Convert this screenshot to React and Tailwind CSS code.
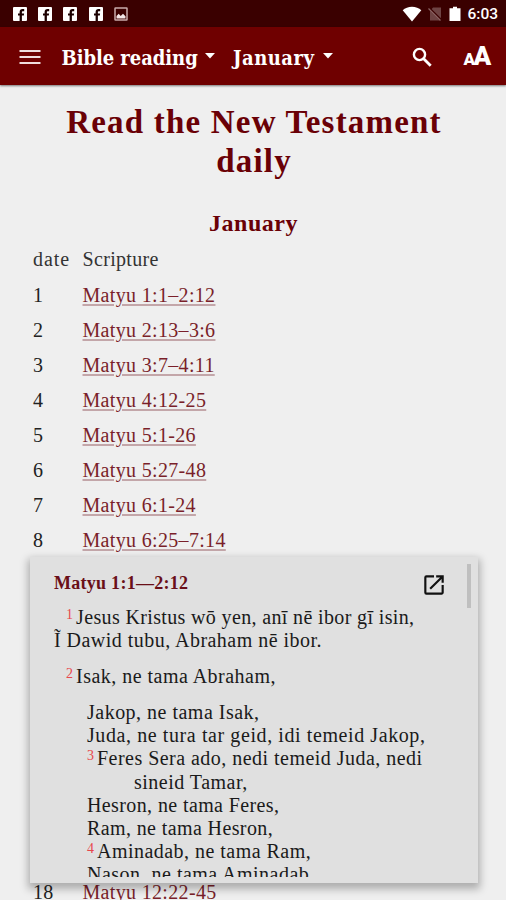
import clsx from "clsx";

const readings = [
  { date: "1", text: "Matyu 1:1–2:12" },
  { date: "2", text: "Matyu 2:13–3:6" },
  { date: "3", text: "Matyu 3:7–4:11" },
  { date: "4", text: "Matyu 4:12-25" },
  { date: "5", text: "Matyu 5:1-26" },
  { date: "6", text: "Matyu 5:27-48" },
  { date: "7", text: "Matyu 6:1-24" },
  { date: "8", text: "Matyu 6:25–7:14" },
  { date: "18", text: "Matyu 12:22-45", className: "mt-[317px]" },
];

const verses = [
  { verse: "1", text: "Jesus Kristus wō yen, anī nē ibor gī isin,", className: "ml-3 tracking-[0.36px]" },
  { text: "Ĩ Dawid tubu, Abraham nē ibor.", className: "tracking-[0.47px]" },
  { verse: "2", text: "Isak, ne tama Abraham,", className: "mt-[13px] ml-3 tracking-[0.48px]" },
  { text: "Jakop, ne tama Isak,", className: "mt-[12.500px] ml-[33px] tracking-[0.49px]" },
  { text: "Juda, ne tura tar geid, idi temeid Jakop,", className: "ml-[33px] tracking-[0.59px]" },
  { verse: "3", text: "Feres Sera ado, nedi temeid Juda, nedi", className: "ml-[33px] tracking-[0.47px]" },
  { text: "sineid Tamar,", className: "ml-20 tracking-[0.49px]" },
  { text: "Hesron, ne tama Feres,", className: "ml-[33px] tracking-[0.39px]" },
  { text: "Ram, ne tama Hesron,", className: "ml-[33px] tracking-[0.39px]" },
  { verse: "4", text: "Aminadab, ne tama Ram,", className: "ml-[33px] tracking-[0.47px]" },
  { text: "Nason, ne tama Aminadab,", className: "ml-[33px] tracking-[0.49px]" },
];

const FacebookIcon = () => (
  <svg viewBox="0 0 14 14" className="h-3.5 w-3.5">
    <rect width="14" height="14" rx="1" fill="#fff" />
    <path
      fill="#1c0000"
      d="M6.600 14V8.600H5V6.400h1.600V5c0-1.900 1.100-3 2.900-3h1.700v2.200H9.900c-.7 0-1 .3-1 1v1.200h2.200l-.3 2.200H8.900V14z"
    />
  </svg>
);

const StatusBar = () => (
  <div className="flex h-[27px] shrink-0 items-center bg-[#3a0000] pt-px pr-[8px] pl-[13px]">
    <div className="flex items-center gap-[11.200px]">
      <FacebookIcon />
      <FacebookIcon />
      <FacebookIcon />
      <FacebookIcon />
      <svg viewBox="0 0 14 14" className="h-3.5 w-3.5" fill="none">
        <rect x="1" y="1" width="12" height="12" rx="0.5" stroke="#c9aaaa" strokeWidth="1.500" />
        <path d="M2.500 11.500V9l2.200-2.200 2 2.200L9 6.800l2.500 2.400v2.300z" fill="#f3e6e6" />
      </svg>
    </div>
    <div className="ml-auto flex items-center">
      <svg viewBox="0 0 20 16" className="h-4 w-5">
        <path d="M10 15.500.7 4.200C3 2 6.500.8 10 .8s7 1.200 9.300 3.400z" fill="#fff" />
      </svg>
      <svg viewBox="0 0 14 16" className="ml-[6px] h-4 w-3.5">
        <path d="M5 1.500h8v13H2V5z" fill="#6e4343" />
        <path d="M1 2l12.500 12.500" stroke="#3a0000" strokeWidth="2.400" />
        <path d="M.5 2.500 12.500 14.500" stroke="#8a6161" strokeWidth="1.200" />
      </svg>
      <svg viewBox="0 0 12 16" className="ml-[7px] h-4 w-3">
        <path d="M4 .8h4v1.500h3.500V15H.5V2.300H4z" fill="#fff" />
      </svg>
      <span className="mt-0.5 ml-[6px] font-['Roboto'] text-[15.500px] leading-none font-medium text-white">6:03</span>
    </div>
  </div>
);

const Caret = ({ className }) => (
  <svg viewBox="0 0 10 6" className={clsx("h-1.5 w-2.5", className)}>
    <path d="M0 0h10L5 5.500z" fill="#fff" />
  </svg>
);

const AppBar = () => (
  <header className="flex h-[58px] shrink-0 items-center bg-[#6f0000] font-['DejaVu_Serif_Condensed','DejaVu_Serif',serif] text-[20px] font-bold text-white shadow-[0_1px_2px_rgba(0,0,0,0.5)]">
    <svg viewBox="0 0 22 16" className="mt-px ml-[19px] h-4 w-[22px]">
      <path d="M.5 2h21M.5 8h21M.5 14h21" stroke="#f0dcdc" strokeWidth="2.200" />
    </svg>
    <span className="ml-[20.500px] w-[138px] pt-1 tracking-[-0.050px] whitespace-nowrap">Bible reading</span>
    <Caret className="ml-[5.500px]" />
    <span className="ml-[18px] w-[83px] pt-1 tracking-[0.5px] whitespace-nowrap">January</span>
    <Caret className="ml-[7px]" />
    <svg viewBox="0 0 20 20" className="mt-px ml-auto h-5 w-5" fill="none" stroke="#fff" strokeWidth="2.400">
      <circle cx="7.500" cy="7.500" r="5.600" />
      <path d="m11.700 11.700 7 7" strokeWidth="2.800" />
    </svg>
    <div className="mr-[15px] ml-[31.500px] flex w-[27.500px] items-baseline font-['Roboto'] leading-none font-black">
      <span className="text-[17px]">A</span>
      <span className="-ml-[1.500px] text-[26px]">A</span>
    </div>
  </header>
);

const ReadingRow = ({ date, text, className }) => (
  <div className={clsx("flex h-[35.100px] items-center pl-[33px]", className)}>
    <span className="w-[49.500px] text-[#222]">{date}</span>
    <a className="text-[#7a1f2a] underline decoration-[#c3a6a9] decoration-2 underline-offset-2">{text}</a>
  </div>
);

const PassagePopup = () => (
  <section className="absolute top-[557px] left-[30px] flex h-[326px] w-[447.500px] flex-col bg-[#e0e0e0] pb-1.5 shadow-[0_4px_8px_2px_rgba(0,0,0,0.28)]">
    <div className="flex h-[49px] shrink-0 items-center justify-between pr-[30.500px] pl-6">
      <h3 className="pt-1 text-[18px] font-bold tracking-[0.27px] text-[#6a0f18]">Matyu 1:1—2:12</h3>
      <svg viewBox="0 0 24 24" className="mt-[7px] h-[26px] w-[26px]" fill="#111">
        <path d="M19 19H5V5h7V3H5a2 2 0 0 0-2 2v14a2 2 0 0 0 2 2h14c1.100 0 2-.9 2-2v-7h-2v7zM14 3v2h3.590l-9.830 9.830 1.410 1.410L19 6.410V10h2V3h-7z" />
      </svg>
    </div>
    <div className="flex-1 overflow-hidden pl-6 text-[20px] leading-[23.200px] text-[#1a1a1a]">
      {verses.map(({ verse, text, className }) => (
        <p key={text} className={clsx("h-[23.200px] whitespace-nowrap", className)}>
          {verse && (
            <span className="relative -top-[5px] mr-[3px] inline-block w-[7px] text-[14px] leading-none tracking-normal text-[#e8474c]">
              {verse}
            </span>
          )}
          {text}
        </p>
      ))}
    </div>
    <div className="absolute top-[7px] right-[6.500px] h-11 w-[4.500px] bg-[#bfbfbf]" />
  </section>
);

export default function App() {
  return (
    <div className="relative flex h-[900px] w-[506px] flex-col overflow-hidden bg-[#efefef] font-['Liberation_Serif',serif]">
      <StatusBar />
      <AppBar />
      <main className="text-[20px] tracking-[0.33px]">
        <h1 className="mt-[18px] pl-0.5 text-center text-[33px] leading-[38.500px] font-bold tracking-[1.200px] text-[#6a0006]">
          Read the New Testament
          <br />
          daily
        </h1>
        <h2 className="mt-[27px] pl-px text-center text-2xl leading-8 font-bold tracking-[0.5px] text-[#6a0006]">January</h2>
        <div className="mt-[2px] mb-px flex h-[35.100px] items-center pl-[33px] text-[#333]">
          <span className="w-[49.500px] tracking-[0.9px]">date</span>
          <span>Scripture</span>
        </div>
        {readings.map((reading) => (
          <ReadingRow key={reading.date} {...reading} />
        ))}
      </main>
      <PassagePopup />
    </div>
  );
}
